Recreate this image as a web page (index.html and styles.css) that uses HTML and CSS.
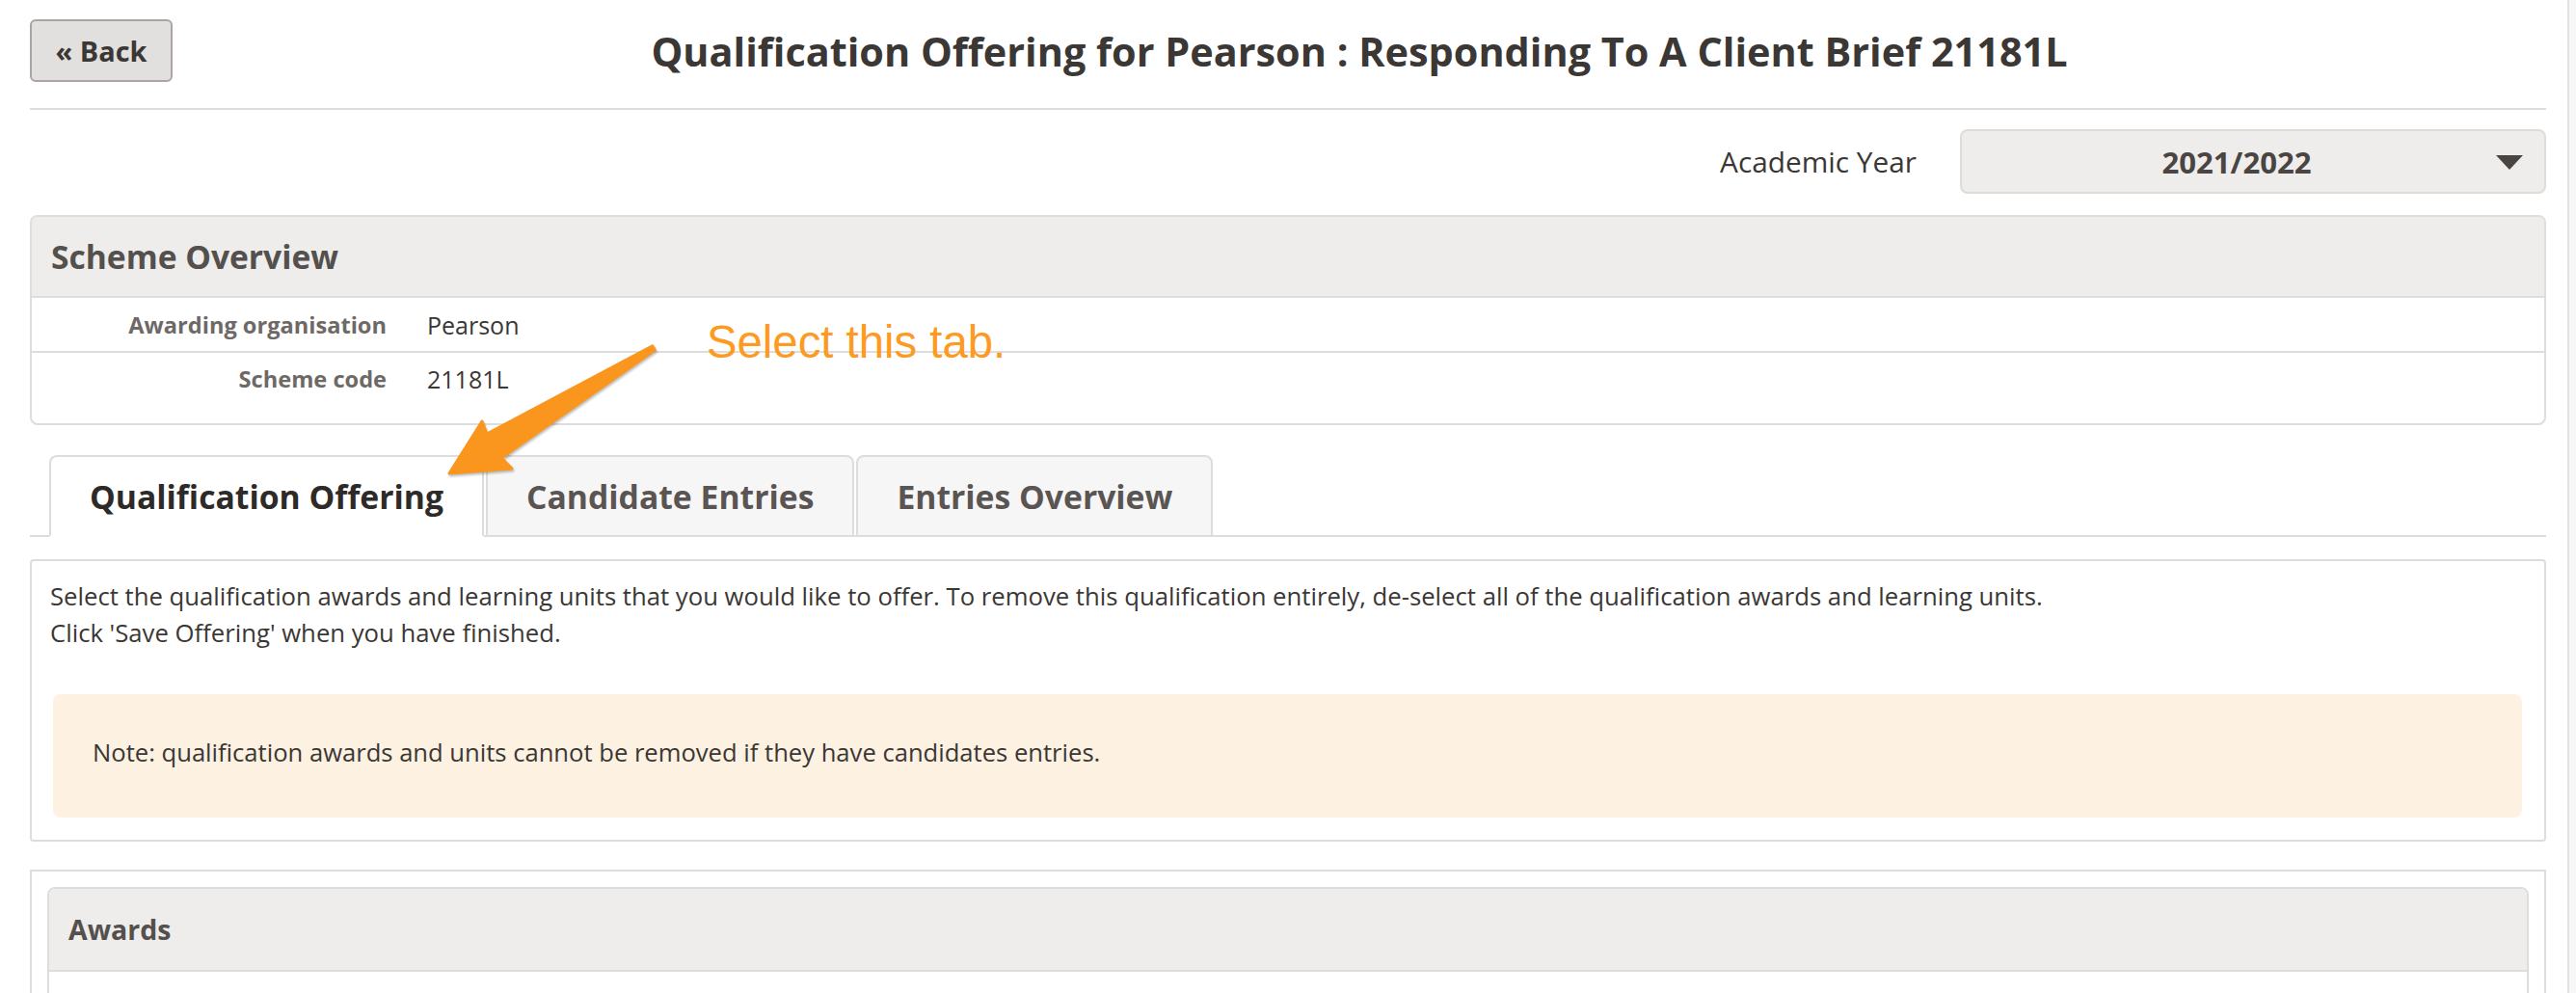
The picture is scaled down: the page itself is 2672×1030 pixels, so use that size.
FILE: index.html
```html
<!DOCTYPE html>
<html lang="en">
<head>
    <meta charset="UTF-8">
    <title>Qualification Offering</title>
    <link rel="stylesheet" href="styles.css">
</head>
<body>
    <div class="page">
        <div class="main">
            <header class="page-head">
                <button class="back-btn">« Back</button>
                <h1>Qualification Offering for Pearson : Responding To A Client Brief 21181L</h1>
            </header>

            <div class="year-row">
                <label>Academic Year</label>
                <div class="year-select">
                    <span>2021/2022</span>
                    <span class="caret"></span>
                </div>
            </div>

            <section class="panel">
                <div class="panel-head">Scheme Overview</div>
                <div class="info">
                    <div class="info-row">
                        <div class="info-label">Awarding organisation</div>
                        <div class="info-value">Pearson</div>
                    </div>
                    <div class="info-row">
                        <div class="info-label">Scheme code</div>
                        <div class="info-value">21181L</div>
                    </div>
                </div>
            </section>

            <ul class="tabs">
                <li class="tab active">Qualification Offering</li>
                <li class="tab">Candidate Entries</li>
                <li class="tab">Entries Overview</li>
            </ul>

            <section class="panel tab-body">
                <p>Select the qualification awards and learning units that you would like to offer. To remove this qualification entirely, de-select all of the qualification awards and learning units.<br>Click 'Save Offering' when you have finished.</p>
                <div class="note">Note: qualification awards and units cannot be removed if they have candidates entries.</div>
            </section>

            <section class="panel outer">
                <div class="panel inner">
                    <div class="panel-head awards-head">Awards</div>
                    <div class="inner-body"></div>
                </div>
            </section>
        </div>
        <div class="scrollbar"></div>
    </div>

    <!-- annotation -->
    <div class="callout">Select this tab.</div>
    <svg class="arrow" viewBox="440 340 260 170" width="260" height="170">
        <polygon points="676.7,358.9 505,450 500,437 466,491 531,486 520,475 679.3,363.1"
                 fill="#fa961e" stroke="#fa961e" stroke-width="3" stroke-linejoin="round"/>
    </svg>
</body>
</html>
```

FILE: styles.css
```css
* {
    margin: 0;
    padding: 0;
    box-sizing: border-box;
}

html, body {
    height: 100%;
    overflow: hidden;
}

body {
    font-family: 'Open Sans', 'Noto Sans', sans-serif;
    font-size: 25.7px;
    color: #3b3734;
    background: #fff;
}

.page {
    display: flex;
    min-height: 100vh;
}

.main {
    flex: 1;
    padding: 20px 22px 0 31px;
}

.scrollbar {
    width: 9px;
    background: #f7f7f7;
    border-left: 2px solid #e2e2e2;
}

/* header */
.page-head {
    display: flex;
    align-items: center;
    padding-bottom: 27px;
    border-bottom: 2px solid #dddddd;
}

.back-btn {
    width: 148px;
    height: 65px;
    font-family: inherit;
    font-size: 28.9px;
    font-weight: bold;
    color: #3b3734;
    background: #e1e0de;
    border: 2px solid #aaa5a2;
    border-radius: 6px;
}

.page-head h1 {
    flex: 1;
    text-align: center;
    font-size: 41.4px;
    color: #3b3734;
}

/* academic year */
.year-row {
    display: flex;
    justify-content: flex-end;
    align-items: center;
    gap: 45px;
    margin-top: 20px;
}

.year-row label {
    font-size: 29.8px;
    color: #3b3734;
}

.year-select {
    position: relative;
    width: 608px;
    height: 67px;
    display: flex;
    align-items: center;
    justify-content: center;
    padding-right: 34px;
    background: #eeedeb;
    border: 2px solid #dedcd9;
    border-radius: 8px;
    font-size: 31.1px;
    font-weight: bold;
    color: #4a4542;
}

.caret {
    position: absolute;
    right: 22px;
    top: 25px;
    border-left: 14px solid transparent;
    border-right: 14px solid transparent;
    border-top: 15px solid #4a4542;
}

/* panels */
.panel {
    border: 2px solid #dddddd;
    border-radius: 8px;
    background: #fff;
}

.panel-head {
    height: 84px;
    display: flex;
    align-items: center;
    padding-left: 20px;
    background: #eeedeb;
    border-bottom: 2px solid #dddddd;
    border-radius: 6px 6px 0 0;
    font-size: 33.6px;
    font-weight: bold;
    color: #54504d;
}

.year-row + .panel {
    margin-top: 22px;
}

.info {
    padding-bottom: 20px;
}

.info-row {
    display: flex;
    align-items: center;
    height: 55px;
}

.info-row + .info-row {
    border-top: 2px solid #dddddd;
}

.info-label {
    width: 368px;
    text-align: right;
    font-weight: bold;
    font-size: 23.6px;
    color: #6e6966;
}

.info-value {
    padding-left: 42px;
    font-size: 25px;
    color: #3b3734;
}

/* tabs */
.tabs {
    display: flex;
    list-style: none;
    margin-top: 31px;
    padding-left: 20px;
    border-bottom: 2px solid #dddddd;
}

.tab {
    height: 85px;
    margin-right: 2px;
    margin-bottom: -2px;
    padding: 0 40px;
    display: flex;
    align-items: center;
    background: #f6f6f6;
    border: 2px solid #dddddd;
    border-radius: 8px 8px 0 0;
    font-size: 33.7px;
    font-weight: bold;
    color: #5a5552;
}

.tab.active {
    background: #fff;
    border-bottom-color: #fff;
    color: #2e2a28;
}

.tab-body {
    margin-top: 23px;
    padding: 18px 23px 23px 19px;
    border-radius: 4px;
}

.tab-body p {
    line-height: 37.7px;
}

.note {
    margin-top: 45px;
    margin-left: 3px;
    height: 128px;
    display: flex;
    align-items: center;
    padding: 0 0 8px 41px;
    background: #fdf1e2;
    border-radius: 8px;
    font-size: 25.6px;
}

.outer {
    margin-top: 29px;
    padding: 16px 16px 0 16px;
    border-radius: 0;
}

.awards-head {
    height: 86px;
    font-size: 28.5px;
}

.inner-body {
    height: 200px;
}

/* annotation overlay */
.callout {
    position: absolute;
    left: 733px;
    top: 327px;
    font-family: 'Liberation Sans', Arial, sans-serif;
    font-size: 47.3px;
    color: #fd9a21;
}

.arrow {
    position: absolute;
    left: 440px;
    top: 340px;
    filter: drop-shadow(1px 2px 1px rgba(0, 0, 0, 0.25));
}
```
